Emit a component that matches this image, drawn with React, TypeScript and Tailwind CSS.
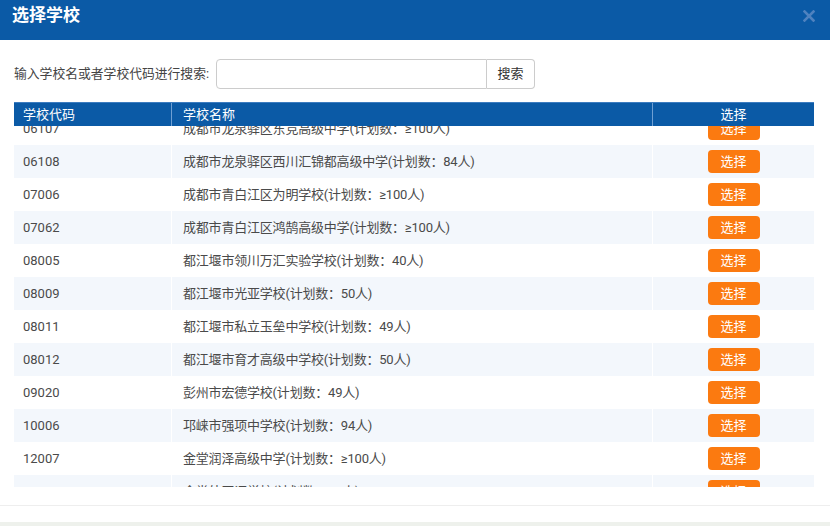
import { useState } from 'react';

type School = { code: string; name: string };

const SCHOOLS: School[] = [
  { code: '06107', name: '成都市龙泉驿区东竞高级中学(计划数：≥100人)' },
  { code: '06108', name: '成都市龙泉驿区西川汇锦都高级中学(计划数：84人)' },
  { code: '07006', name: '成都市青白江区为明学校(计划数：≥100人)' },
  { code: '07062', name: '成都市青白江区鸿鹄高级中学(计划数：≥100人)' },
  { code: '08005', name: '都江堰市领川万汇实验学校(计划数：40人)' },
  { code: '08009', name: '都江堰市光亚学校(计划数：50人)' },
  { code: '08011', name: '都江堰市私立玉垒中学校(计划数：49人)' },
  { code: '08012', name: '都江堰市育才高级中学校(计划数：50人)' },
  { code: '09020', name: '彭州市宏德学校(计划数：49人)' },
  { code: '10006', name: '邛崃市强项中学校(计划数：94人)' },
  { code: '12007', name: '金堂润泽高级中学(计划数：≥100人)' },
  { code: '12021', name: '金堂外国语学校(计划数：90人)' },
];

export default function App() {
  const [query, setQuery] = useState('');

  return (
    <div
      className="flex h-[526px] w-[830px] flex-col overflow-hidden bg-[#eef1ec] text-[13px] text-[#4a4a4a]"
      style={{ fontFamily: 'Roboto, "Noto Sans CJK SC", sans-serif' }}
    >
      <div className="flex h-[522px] flex-col bg-white">
        {/* Title bar */}
        <div className="flex h-10 shrink-0 items-start justify-between bg-[#0b5aa6] pl-3 pr-[15px] pt-[4px]">
          <h1 className="text-[17px] font-bold leading-[22px] text-white">选择学校</h1>
          <svg className="mt-[6px]" width="12" height="12" viewBox="0 0 12 12" aria-hidden>
            <path d="M1.5 1.5 L10.5 10.5 M10.5 1.5 L1.5 10.5" stroke="#4f82bf" strokeWidth="2.6" strokeLinecap="square" />
          </svg>
        </div>

        {/* Search row */}
        <div className="mt-[19px] flex items-center pl-[14px]">
          <label className="w-[202px] text-[12.8px] text-[#444]">输入学校名或者学校代码进行搜索:</label>
          <input
            value={query}
            onChange={(e) => setQuery(e.target.value)}
            className="h-[30px] w-[271px] rounded-l-[4px] border border-[#ccc] px-2 outline-none"
          />
          <button className="h-[30px] w-[48px] rounded-r-[4px] border border-l-0 border-[#ccc] bg-white text-[13px] text-[#333]">
            搜索
          </button>
        </div>

        {/* Table */}
        <div className="mx-[14px] mt-[13px] w-[800px]">
          <div className="flex h-6 border-t border-[#3c7cc0] bg-[#0b5aa6] text-[13px] leading-6 text-white">
            <div className="w-[158px] border-r border-[#6f9fd3] pl-[9px]">学校代码</div>
            <div className="w-[481px] border-r border-[#6f9fd3] pl-[11px]">学校名称</div>
            <div className="flex-1 text-center">选择</div>
          </div>
          <div className="h-[361px] overflow-hidden">
            <div className="-mt-[14px]">
              {SCHOOLS.map((s, i) => (
                <div
                  key={s.code}
                  className={`flex h-[33px] items-center ${i % 2 === 1 ? 'bg-[#f3f7fc]' : 'bg-white'}`}
                >
                  <div className="flex h-full w-[158px] items-center border-r border-white pl-[9px]">{s.code}</div>
                  <div className="flex h-full w-[481px] items-center border-r border-white pl-[11px] tracking-[-0.2px]">
                    {s.name}
                  </div>
                  <div className="flex flex-1 justify-center">
                    <button className="h-[23px] w-[52px] rounded-[4px] bg-[#fb7a10] text-[13px] text-white">选择</button>
                  </div>
                </div>
              ))}
            </div>
          </div>
        </div>

        <div className="mt-auto h-[17px] border-t border-[#eeeeee]" />
      </div>
    </div>
  );
}
